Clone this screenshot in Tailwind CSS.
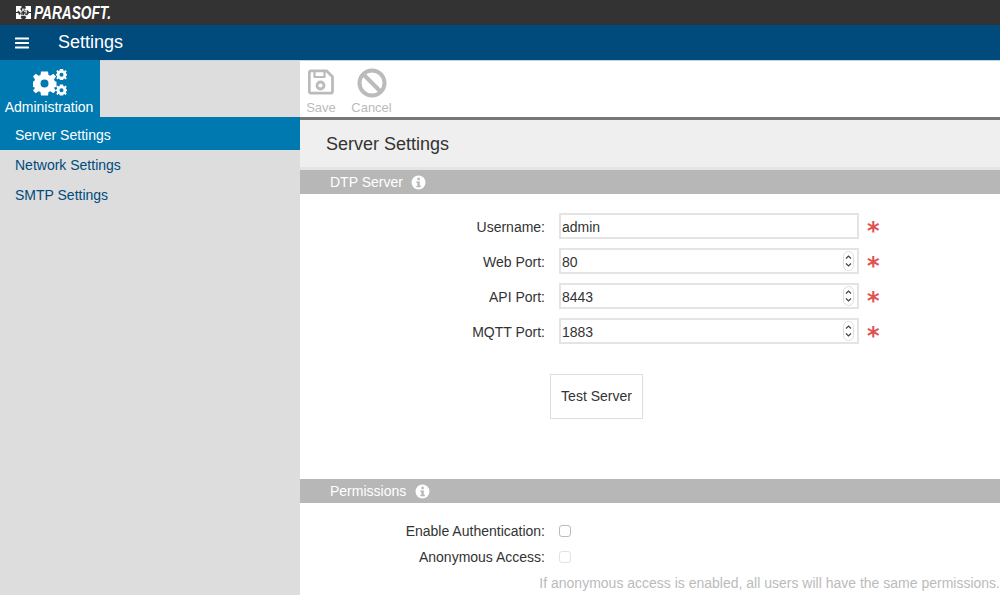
<!DOCTYPE html>
<html>
<head>
<meta charset="utf-8">
<script src="https://cdn.jsdelivr.net/npm/@tailwindcss/browser@4"></script>
</head>
<body class="w-[1000px] h-[595px] overflow-hidden bg-white font-['Liberation_Sans',Arial,sans-serif] text-[#333]">
<div class="h-[25px] bg-[#333333] flex items-center pl-[16px] gap-[3px]">
  <svg width="15" height="13" viewBox="0 0 15 13"><path fill="#fff" d="M0 0h5.500v1.500L4 3l1.500 1.500L4 6 2 4.500 1.500 6H0zM9 0h6v6h-2L11.500 4 10 5 8.500 3.500 10 2zM0 7h2l1.500 2L5 8l1 1.500L4.500 11 6 13H0zM9.500 8.500 11 9.500 13 7h2v6H9l1.500-2-1.500-1z"/><path fill="#fff" d="M6 2.500h2.500V5H11v2.500H9V10H6V7.500H4V5h2z" opacity=".75"/><path fill="#333" d="M6.500 5h1.500v1H9.500v1.500H8V9H6.500V7.500H5.500V6h1z"/></svg>
  <span class="inline-block origin-left scale-x-[0.72] text-white font-bold italic text-[19px] leading-none whitespace-nowrap">PARASOFT.</span>
</div>
<div class="h-[35px] bg-[#004a7c] flex items-center text-white">
  <div class="w-[58px] pl-[15px]">
    <svg width="14" height="12" viewBox="0 0 14 12" fill="#fff"><rect width="14" height="2.2" y="0.4" rx="0.5"/><rect width="14" height="2.2" y="4.900" rx="0.5"/><rect width="14" height="2.2" y="9.400" rx="0.5"/></svg>
  </div>
  <span class="text-[18px] leading-none pb-[2px]">Settings</span>
</div>
<div class="flex h-[535px]">
  <aside class="w-[300px] shrink-0 bg-[#dddddd]">
    <div class="h-[57px] flex">
      <div class="w-[100px] bg-[#0079b0] text-white flex flex-col items-center pt-[9px]">
        <svg width="34" height="27" viewBox="0 0 34 27" fill="#fff">
          <g transform="translate(11.500 14)">
            <path fill-rule="evenodd" d="M-3.500-11.500H3.500L4-8 5.800-7.200 8.800-9.200 11.500-6.500 9.500-3.500 10.300-1.700 12-1.300V4L10.300 4.300 9.500 4.900 11.500 7.500 8.800 10.200 5.800 8.200 4 9 3.500 12.500H-3.500L-4 9-5.800 8.200-8.800 10.200-11.500 7.500-9.500 4.900-10.300 4.300-12 4V-1.300L-10.300-1.700-9.500-3.500-11.500-6.500-8.800-9.200-5.800-7.200-4-8ZM0-3.500A4 4 0 1 0 0 4.500 4 4 0 1 0 0-3.500Z"/>
          </g>
          <g transform="translate(28.500 5.500)">
            <path fill-rule="evenodd" d="M-1.600-5.500H1.600L1.900-3.900 2.900-3.500 4.100-4.500 5.200-3.200 4.300-1.800 4.700-.8 5.500-.6V1.100L4.700 1.300 4.300 2.300 5.200 3.700 4.100 5 2.900 4.100 1.900 4.500 1.600 5.500H-1.600L-1.900 4.500-2.900 4.100-4.100 5-5.200 3.700-4.300 2.300-4.700 1.300-5.500 1.100V-.6L-4.700-.8-4.300-1.800-5.200-3.200-4.100-4.500-2.900-3.500-1.900-3.900ZM0-1.700A2 2 0 1 0 0 2.300 2 2 0 1 0 0-1.700Z"/>
          </g>
          <g transform="translate(28.500 21)">
            <path fill-rule="evenodd" d="M-1.600-5.500H1.600L1.900-3.900 2.900-3.500 4.100-4.500 5.200-3.200 4.300-1.800 4.700-.8 5.500-.6V1.100L4.700 1.300 4.300 2.300 5.200 3.700 4.100 5 2.900 4.100 1.900 4.500 1.600 5.500H-1.600L-1.900 4.500-2.900 4.100-4.100 5-5.200 3.700-4.300 2.300-4.700 1.300-5.500 1.100V-.6L-4.700-.8-4.300-1.800-5.200-3.200-4.100-4.500-2.900-3.500-1.900-3.900ZM0-1.700A2 2 0 1 0 0 2.300 2 2 0 1 0 0-1.700Z"/>
          </g>
        </svg>
        <span class="text-[14px] leading-none mt-[4px] -ml-[2px]">Administration</span>
      </div>
      <div class="flex-1 border-t border-[#c5d6e2]"></div>
    </div>
    <div class="h-[33px] bg-[#0079b0] text-white text-[14px] flex items-center pl-[15px] pt-[3px]">Server Settings</div>
    <div class="h-[30px] text-[#004a7c] text-[14px] flex items-center pl-[15px]">Network Settings</div>
    <div class="h-[30px] text-[#004a7c] text-[14px] flex items-center pl-[15px]">SMTP Settings</div>
  </aside>
  <main class="flex-1 min-w-0">
    <div class="h-[60px] border-t border-[#c5d6e2] border-b-[3px] border-b-[#777] flex items-start pl-[6px] gap-[15px] pt-[8px] text-[#bbb] text-[13px]">
      <div class="flex flex-col items-center w-[30px]">
        <svg width="26" height="26" viewBox="0 0 26 26" fill="none" stroke="#bbb" stroke-width="2.800" stroke-linejoin="round"><path d="M3 1.800h15.500l6 6V22.500a1.700 1.700 0 0 1-1.700 1.700H3A1.700 1.700 0 0 1 1.300 22.500V3.500A1.700 1.700 0 0 1 3 1.800z"/><path d="M6.500 2v6h10V2" stroke-width="2.200"/><circle cx="12.500" cy="16.500" r="3.500"/></svg>
        <span class="leading-none mt-[6px]">Save</span>
      </div>
      <div class="flex flex-col items-center w-[41px] -mt-[1px]">
        <svg width="30" height="30" viewBox="0 0 30 30" fill="none" stroke="#bbb" stroke-width="4"><circle cx="15" cy="15" r="12.500"/><path d="M6 6l18 18"/></svg>
        <span class="leading-none mt-[3px]">Cancel</span>
      </div>
    </div>
    <div class="h-[47px] bg-[#efefef] flex items-center pl-[26px] pt-[1px] text-[18px] text-[#333]">Server Settings</div>
    <div class="h-[3px] bg-[#e4e4e4]"></div>
    <div class="h-[24px] bg-[#b7b7b7] flex items-center pl-[30px] gap-[8px] text-white text-[14px]">
      <span>DTP Server</span>
      <svg width="15" height="15" viewBox="0 0 14 14"><circle cx="7" cy="7" r="6.500" fill="#fff"/><path d="M6 2.600h2.200v2.200H6zM5 6h3.200v4H9.200v1.400H5V10H6V7.400H5z" fill="#b7b7b7"/></svg>
    </div>
    <div class="h-[285px] pt-[19px] flex flex-col items-start text-[14px]">
      <div class="flex flex-col gap-[9px]">
        <div class="flex items-center h-[26px]">
          <label class="w-[245px] text-right mr-[14px] pt-[2px]">Username:</label>
          <div class="w-[300px] h-[26px] border-2 border-[#e4e4e4] pt-[2px] pl-[1px] flex items-center">admin</div>
          <span class="ml-[8px] text-[#e05252] text-[24px] font-bold leading-none h-[26px] pt-[6px] font-['DejaVu_Sans',sans-serif] w-[12px]">*</span>
        </div>
        <div class="flex items-center h-[26px]">
          <label class="w-[245px] text-right mr-[14px] pt-[2px]">Web Port:</label>
          <div class="w-[300px] h-[26px] border-2 border-[#e4e4e4] pl-[1px] flex items-center justify-between"><span class="pt-[2px]">80</span>
            <svg class="mr-[3px]" width="11" height="20" viewBox="0 0 11 20" fill="none"><rect x=".5" y=".5" width="10" height="19" rx="5" fill="#fff" stroke="#ddd"/><path d="M3 7.500l2.500-2.500 2.500 2.500M3 12.500l2.500 2.500 2.500-2.500" stroke="#444" stroke-width="1.200"/></svg></div>
          <span class="ml-[8px] text-[#e05252] text-[24px] font-bold leading-none h-[26px] pt-[6px] font-['DejaVu_Sans',sans-serif] w-[12px]">*</span>
        </div>
        <div class="flex items-center h-[26px]">
          <label class="w-[245px] text-right mr-[14px] pt-[2px]">API Port:</label>
          <div class="w-[300px] h-[26px] border-2 border-[#e4e4e4] pl-[1px] flex items-center justify-between"><span class="pt-[2px]">8443</span>
            <svg class="mr-[3px]" width="11" height="20" viewBox="0 0 11 20" fill="none"><rect x=".5" y=".5" width="10" height="19" rx="5" fill="#fff" stroke="#ddd"/><path d="M3 7.500l2.500-2.500 2.500 2.500M3 12.500l2.500 2.500 2.500-2.500" stroke="#444" stroke-width="1.200"/></svg></div>
          <span class="ml-[8px] text-[#e05252] text-[24px] font-bold leading-none h-[26px] pt-[6px] font-['DejaVu_Sans',sans-serif] w-[12px]">*</span>
        </div>
        <div class="flex items-center h-[26px]">
          <label class="w-[245px] text-right mr-[14px] pt-[2px]">MQTT Port:</label>
          <div class="w-[300px] h-[26px] border-2 border-[#e4e4e4] pl-[1px] flex items-center justify-between"><span class="pt-[2px]">1883</span>
            <svg class="mr-[3px]" width="11" height="20" viewBox="0 0 11 20" fill="none"><rect x=".5" y=".5" width="10" height="19" rx="5" fill="#fff" stroke="#ddd"/><path d="M3 7.500l2.500-2.500 2.500 2.500M3 12.500l2.500 2.500 2.500-2.500" stroke="#444" stroke-width="1.200"/></svg></div>
          <span class="ml-[8px] text-[#e05252] text-[24px] font-bold leading-none h-[26px] pt-[6px] font-['DejaVu_Sans',sans-serif] w-[12px]">*</span>
        </div>
      </div>
      <button class="ml-[250px] mt-[30px] w-[93px] h-[45px] border border-[#ddd] text-[14px] text-[#333] bg-white">Test Server</button>
    </div>
    <div class="h-[24px] bg-[#b7b7b7] flex items-center pl-[30px] gap-[9px] text-white text-[14px]">
      <span>Permissions</span>
      <svg width="15" height="15" viewBox="0 0 14 14"><circle cx="7" cy="7" r="6.500" fill="#fff"/><path d="M6 2.600h2.200v2.200H6zM5 6h3.200v4H9.200v1.400H5V10H6V7.400H5z" fill="#b7b7b7"/></svg>
    </div>
    <div class="pt-[15px] text-[14px]">
      <div class="flex items-center h-[26px]">
        <label class="w-[245px] text-right mr-[14px]">Enable Authentication:</label>
        <span class="w-[12px] h-[12px] border border-[#bbb] rounded-[3px] bg-white"></span>
      </div>
      <div class="flex items-center h-[26px]">
        <label class="w-[245px] text-right mr-[14px]">Anonymous Access:</label>
        <span class="w-[12px] h-[12px] border border-[#e2e2e2] rounded-[3px] bg-white"></span>
      </div>
      <div class="h-[26px] flex items-center justify-end text-[#bbb] whitespace-nowrap">If anonymous access is enabled, all users will have the same permissions.</div>
    </div>
  </main>
</div>
</body>
</html>
